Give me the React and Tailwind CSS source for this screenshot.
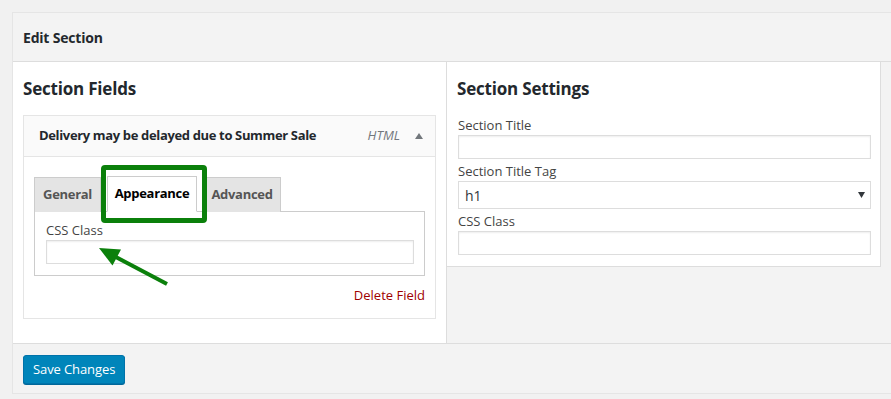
import React from "react";

// Campo de entrada simple, sin estado
function Input({ h = "h-[24px]" }) {
  return <div className={`${h} w-full border border-[#dddddd] bg-white shadow-[inset_0_1px_2px_rgba(0,0,0,0.07)]`} />;
}

function Tab({ label, active, w }) {
  return (
    <div
      className={
        active
          ? `${w} h-[36px] flex items-center justify-center border border-[#cccccc] border-b-white bg-white text-[13px] font-bold tracking-[-0.3px] text-black`
          : `${w} h-[35px] flex items-center justify-center border border-[#cccccc] border-b-0 bg-[#e4e4e4] text-[13px] font-bold tracking-[-0.3px] text-[#555555]`
      }
    >
      {label}
    </div>
  );
}

export default function App() {
  return (
    <div className="relative min-h-[399px] overflow-hidden bg-[#f1f1f1] pt-[12px] pl-[12px] font-['Open_Sans',sans-serif] text-[#23282d]">
      <div className="w-[900px] border border-[#e5e5e5] bg-[#f3f3f3]">
        {/* cabecera */}
        <div className="h-[49px] flex items-center px-[10px] border-b border-[#dddddd] text-[14px] font-bold tracking-[-0.2px]">
          Edit Section
        </div>

        {/* cuerpo: dos columnas */}
        <div className="flex">
          <div className="w-[434px] h-[281px] bg-white border-r border-[#dddddd] px-[10px]">
            <div className="pt-[15px] h-[53px] text-[17px] leading-[24px] font-bold tracking-[-0.2px]">Section Fields</div>
            <div className="border border-[#e5e5e5]">
              <div className="h-[41px] flex items-center pl-[15px] pr-[12px] bg-[#fafafa] border-b border-[#e5e5e5]">
                <span className="text-[13px] font-bold tracking-[-0.35px] flex-1">Delivery may be delayed due to Summer Sale</span>
                <span className="text-[13px] italic text-[#72777c]">HTML</span>
                <svg width="8" height="6" viewBox="0 0 8 6" className="ml-[15px]">
                  <path d="M4 0 L8 6 L0 6 Z" fill="#72777c" />
                </svg>
              </div>
              <div className="px-[10px] pt-[19px]">
                <div className="flex items-end gap-[6px] -mb-px relative">
                  <Tab label="General" w="w-[67px]" />
                  <Tab label="Appearance" w="w-[90px]" active />
                  <Tab label="Advanced" w="w-[78px]" />
                </div>
                <div className="border border-[#cccccc] pt-[8px] pb-[11px] pl-[11px] pr-[10px]">
                  <div className="text-[13px] leading-[20px] text-[#444444]">CSS Class</div>
                  <Input />
                </div>
                <div className="pt-[9px] pb-[13px] text-right text-[13px] leading-[20px] text-[#a00000]">Delete Field</div>
              </div>
            </div>
          </div>

          <div className="w-[434px] h-[205px] bg-white border-r border-b border-[#dddddd] pl-[11px] pr-[9px]">
            <div className="pt-[15px] h-[53px] -ml-px text-[17px] leading-[24px] font-bold tracking-[-0.2px]">Section Settings</div>
            <div className="text-[13px] leading-[20px] text-[#444444]">Section Title</div>
            <Input />
            <div className="mt-[2px] text-[13px] leading-[20px] text-[#444444]">Section Title Tag</div>
            <div className="h-[28px] flex items-center justify-between border border-[#dddddd] bg-white pl-[6px] pr-[5px] text-[14px] text-[#32373c]">
              <span>h1</span>
              <svg width="7" height="6" viewBox="0 0 7 6">
                <path d="M0 0 L7 0 L3.5 6 Z" fill="#32373c" />
              </svg>
            </div>
            <div className="mt-[2px] text-[13px] leading-[20px] text-[#444444]">CSS Class</div>
            <Input />
          </div>
        </div>

        {/* pie */}
        <div className="h-[50px] border-t border-[#dddddd] px-[10px] pt-[11px]">
          <button className="h-[29px] px-[9px] rounded-[3px] bg-[#0085ba] border border-[#0073aa] shadow-[0_1px_0_#006799] text-[13px] tracking-[-0.1px] text-white">
            Save Changes
          </button>
        </div>
      </div>

      {/* resaltado verde */}
      <div className="absolute left-[101px] top-[165px] w-[106px] h-[58px] border-[5px] border-[#0b800b] rounded-[4px]" />
      <svg className="absolute left-0 top-0" width="891" height="399">
        <line x1="167" y1="284" x2="112" y2="255" stroke="#0b800b" strokeWidth="4" />
        <path d="M99 248 L121 249.5 L112.5 265.5 Z" fill="#0b800b" />
      </svg>
    </div>
  );
}
